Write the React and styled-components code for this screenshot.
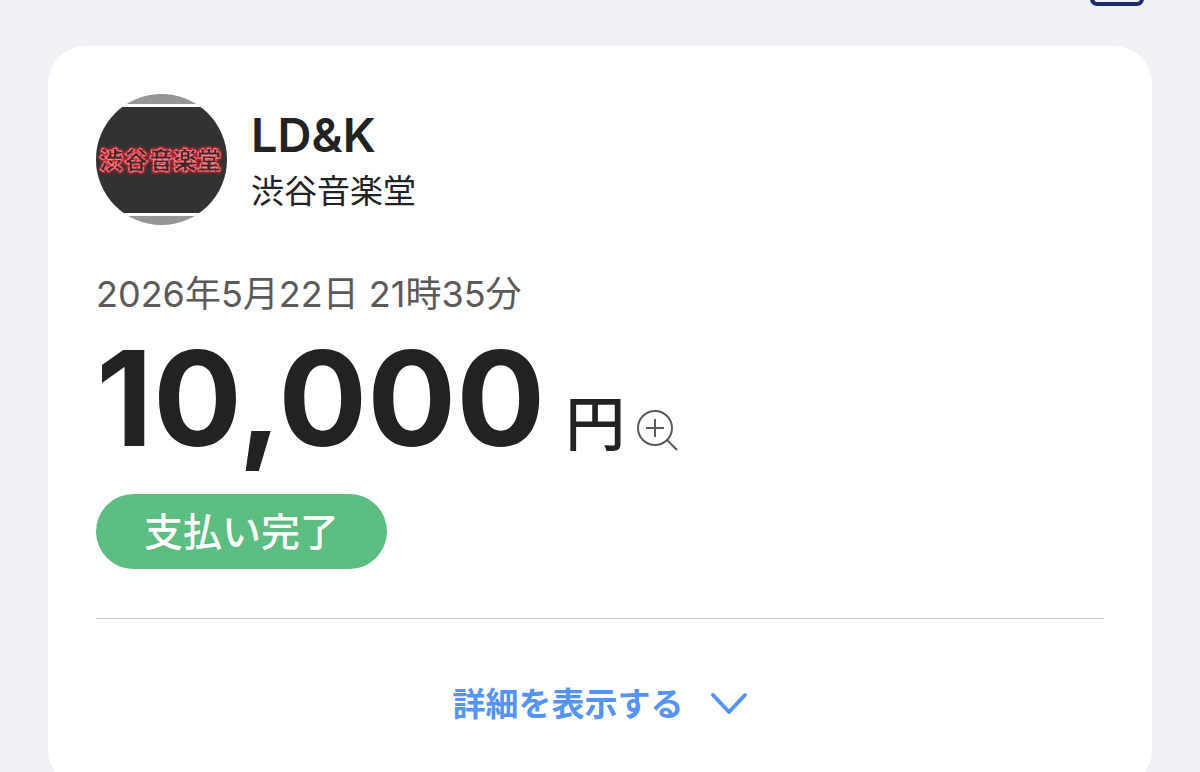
import React from 'react'
import styled, { createGlobalStyle } from 'styled-components'

const GlobalStyle = createGlobalStyle`
	* {
		box-sizing: border-box;
	}
	body {
		margin: 0;
		background-color: #eff1f6;
		color: #222;
		font-family: Inter, 'Noto Sans CJK JP', sans-serif;
		overflow: hidden;
	}
`

const Page = styled.div`
	height: 100vh;
	overflow: hidden;
`

const TopBar = styled.header`
	display: flex;
	justify-content: flex-end;
	align-items: flex-end;
	height: 6px;
	padding: 0 56px;
	overflow: hidden;
`

const IconButton = styled.button`
	display: flex;
	padding: 0;
	border: none;
	background: none;
	color: ${props => props.$color};
	cursor: pointer;
`

const Card = styled.main`
	margin: 40px 48px 0;
	padding: 48px 48px 60px;
	border-radius: 38px;
	background-color: #fff;
`

const Merchant = styled.section`
	display: flex;
	align-items: center;
	gap: 24px;
`

const Logo = styled.svg`
	width: 131px;
	height: 131px;
	flex: none;
`

const MerchantText = styled.div`
	padding-top: 6px;
`

const MerchantName = styled.h1`
	margin: 0;
	font-size: 47px;
	font-weight: 600;
	line-height: 56px;
`

const ShopName = styled.p`
	margin: 0;
	font-size: 33px;
	line-height: 56px;
`

const PaidAt = styled.time`
	display: block;
	margin-top: 45px;
	color: #5a5a5a;
	font-size: 36px;
	line-height: 48px;
`

const Amount = styled.div`
	display: flex;
	align-items: baseline;
	gap: 20px;
	font-size: 132px;
	font-weight: 700;
	line-height: 160px;
`

const Unit = styled.span`
	display: flex;
	align-items: flex-end;
	gap: 12px;
	font-size: 60px;
	font-weight: 500;
	line-height: 56px;
`

const Status = styled.p`
	width: fit-content;
	margin: 16px 0 0;
	padding: 0 48px;
	border-radius: 38px;
	background-color: #5bbd80;
	color: #fff;
	font-size: 39px;
	font-weight: 500;
	line-height: 75px;
`

const Divider = styled.hr`
	margin: 49px 0 0;
	border: none;
	border-top: 1px solid #c8c8c8;
`

const DetailsButton = styled.button`
	display: flex;
	align-items: center;
	gap: 26px;
	margin: 61px auto 0;
	padding: 0;
	border: none;
	background: none;
	color: #5694f4;
	font: inherit;
	font-size: 33px;
	font-weight: 700;
	line-height: 48px;
	cursor: pointer;
`

const MerchantLogo = () => (
	<Logo viewBox="0 0 131 131" role="img" aria-label="渋谷音楽堂">
		<defs>
			<clipPath id="disc">
				<circle cx="65.5" cy="65.5" r="65.5" />
			</clipPath>
			<filter id="glow" x="-10%" y="-30%" width="120%" height="160%">
				<feGaussianBlur stdDeviation="1" />
			</filter>
		</defs>
		<g clipPath="url(#disc)">
			<rect width="131" height="131" fill="#969696" />
			<rect y="10" width="131" height="112" fill="#fff" />
			<rect y="13" width="131" height="106" fill="#323232" />
			<g
				fontFamily="'Noto Sans CJK JP', sans-serif"
				fontSize="24"
				fontWeight="900"
				strokeLinejoin="round"
			>
				<text x="3 28 53 77 101" y="75" fill="#d8232e" stroke="#d8232e" strokeWidth="3" filter="url(#glow)" aria-hidden="true">
					渋谷音楽堂
				</text>
				<text x="3 28 53 77 101" y="75" fill="#4a2428" stroke="#f8888e" strokeWidth="1" strokeDasharray="5 1">
					渋谷音楽堂
				</text>
			</g>
		</g>
	</Logo>
)

const App = () => {
	return (
		<Page>
			<GlobalStyle />
			<TopBar>
				<IconButton $color="#172a6b" aria-label="閉じる">
					<svg width="54" height="54" viewBox="0 0 54 54" fill="none" stroke="currentColor" strokeWidth="4">
						<rect x="2" y="2" width="50" height="50" rx="5" />
					</svg>
				</IconButton>
			</TopBar>
			<Card>
				<Merchant>
					<MerchantLogo />
					<MerchantText>
						<MerchantName>LD&amp;K</MerchantName>
						<ShopName>渋谷音楽堂</ShopName>
					</MerchantText>
				</Merchant>
				<PaidAt dateTime="2026-05-22T21:35">2026年5月22日 21時35分</PaidAt>
				<Amount>
					10,000
					<Unit>
						円
						<IconButton $color="#5a5a5a" aria-label="金額を拡大">
							<svg width="42" height="42" viewBox="0 0 42 42" fill="none" stroke="currentColor" strokeWidth="2">
								<circle cx="18" cy="18" r="17" />
								<path d="M30 30L40 40M18 9V27M9 18H27" />
							</svg>
						</IconButton>
					</Unit>
				</Amount>
				<Status>支払い完了</Status>
				<Divider />
				<DetailsButton type="button">
					詳細を表示する
					<svg width="38" height="24" viewBox="0 0 38 24" fill="none" stroke="currentColor" strokeWidth="4" strokeLinecap="round" strokeLinejoin="round">
						<path d="M3 3L19 20L35 3" />
					</svg>
				</DetailsButton>
			</Card>
		</Page>
	)
}

export default App
